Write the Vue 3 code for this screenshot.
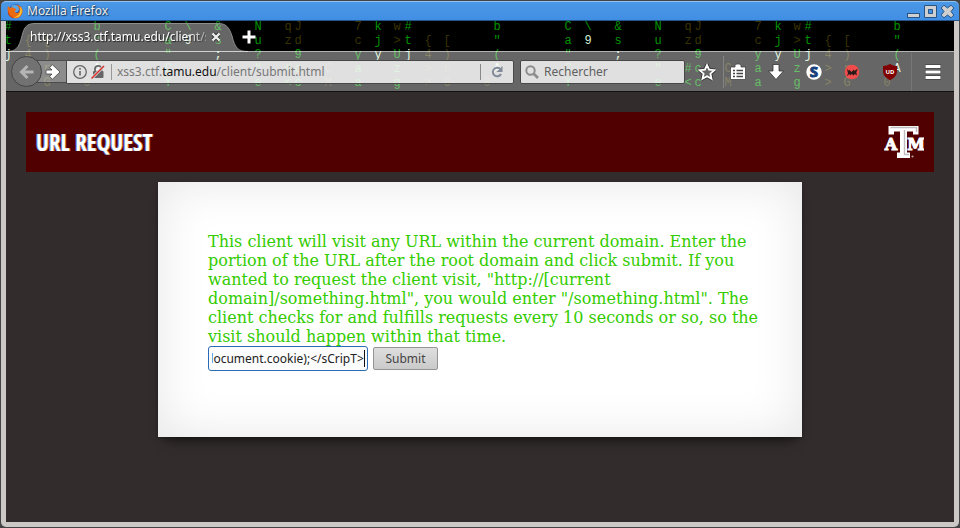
<script setup>
import { ref, onMounted } from 'vue'

// Falling-glyph theme: one 400px tile, repeated across the window.
// Tones: g = green, d = dim, w = bright
const columns = [
  { x: 8, tones: 'ggw', chars: ['#', 't', 'j'] },
  { x: 28, tones: 'ddddd', chars: ['', '{', '4', '>', '>'] },
  { x: 47, tones: 'ddddd', chars: ['', '[', ')', 'r', 'G'] },
  { x: 87, tones: 'ddddd', chars: ['', '', '', '', '0'] },
  { x: 97, tones: 'gggw', chars: ['b', '"', '(', 'A'] },
  { x: 168, tones: 'ggggg', chars: ['C', 'a', '"', 'C', 'Y'] },
  { x: 188, tones: 'gw', chars: ['\\', '9'] },
  { x: 218, tones: 'ggw', chars: ['&', 's', ';'] },
  { x: 258, tones: 'ggggg', chars: ['N', 'u', '?', '"', 'e'] },
  { x: 288, tones: 'ddggg', chars: ['q', 'z', '', '#', '<'] },
  { x: 298, tones: 'ddggg', chars: ['J', 'd', '9', 'c', 'c'] },
  { x: 328, tones: 'ddddd', chars: ['', '', '', 'C', 'M'] },
  { x: 358, tones: 'ddggg', chars: ['7', 'c', 'y', 'a', 'a'] },
  { x: 378, tones: 'ggw', chars: ['k', 'j', 'y'] },
  { x: 397, tones: 'ddggg', chars: ['w', '>', 'U', 'z', 'g'] },
]
const glyphs = [0, 400, 800].flatMap((offset) =>
  columns.flatMap((c) =>
    c.chars.map((ch, row) => ({
      key: `${offset}-${c.x}-${row}`,
      ch,
      tone: c.tones[row],
      x: c.x + offset - 6,
      y: 9 + row * 14,
    })),
  ).filter((g) => g.ch),
)

const path = ref('document.cookie);<\/sCripT>')
const pathInput = ref(null)

onMounted(() => {
  const el = pathInput.value
  el.focus()
  el.setSelectionRange(path.value.length, path.value.length)
  el.scrollLeft = el.scrollWidth
})
</script>

<template>
  <div class="window">
    <header class="titlebar">
      <svg class="fox" viewBox="0 0 16 16" aria-hidden="true">
        <circle cx="8.5" cy="7.5" r="6.5" fill="#2b4f9e" />
        <circle cx="8" cy="5.5" r="4" fill="#5aa6e6" />
        <path d="M1 3 L3 5 Q5 3.6 7 5 L9.5 6.5 L7.5 8.2 Q8.5 10.6 11 9.8 Q13 8.8 12.4 6 Q11.6 3 9 2 Q14.2 2 15.6 7 Q15.8 12 12 14.4 Q7 16.6 3 13.4 Q-.6 9.6 1 3Z" fill="#ec6a12" />
        <path d="M13.5 3.5 Q15.8 7.5 14.2 10.8 Q12 15 7 14.6 Q12 12.6 13 9Z" fill="#ffc933" />
        <path d="M1.2 7 Q1 13 7.5 15.2 Q2.5 14.8 .9 10.6Z" fill="#b92d10" />
      </svg>
      <span class="title">Mozilla Firefox</span>
      <div class="controls">
        <button class="ctl" aria-label="Minimize"><svg viewBox="0 0 15 15"><rect x="1.5" y="9.5" width="12" height="4" fill="#cfcfcf" stroke="#265487" /></svg></button>
        <button class="ctl" aria-label="Maximize"><svg viewBox="0 0 15 15"><path d="M1.5 1.5h12v12h-12z M5.500 5.500v4h4v-4z" fill="#cfcfcf" fill-rule="evenodd" stroke="#265487" /></svg></button>
        <button class="ctl" aria-label="Close"><svg viewBox="0 0 15 15"><path d="M4 1.200 7.500 4 11 1.200 13.800 4 11 7.500 13.800 11 11 13.800 7.500 11 4 13.800 1.200 11 4 7.500 1.200 4Z" fill="#cfcfcf" stroke="#265487" stroke-linejoin="round" /></svg></button>
      </div>
    </header>

    <div class="frame">
      <div class="chrome">
        <svg class="rain" aria-hidden="true">
          <text v-for="g in glyphs" :key="g.key" :x="g.x" :y="g.y" :class="g.tone">{{ g.ch }}</text>
        </svg>

        <div class="tabs">
          <div class="tab">
            <svg class="tab-shape" viewBox="0 0 242 31" aria-hidden="true">
              <path d="M0 31 C10 31 13 27 16 15 C18 6 21 2.500 29 2.500 L212 2.500 C220 2.500 223 6 226 15 C229 27 232 31 242 31Z" fill="#fff" fill-opacity=".4" />
              <path d="M0 30.500 C10 30.500 13 27 16 15 C18 6 21 2.500 29 2.500 L212 2.500 C220 2.500 223 6 226 15 C229 27 232 30.500 242 30.500" fill="none" stroke="#8e8e8e" />
            </svg>
            <span class="tab-title">http://xss3.ctf.tamu.edu/client/s</span>
            <button class="tab-close" aria-label="Close tab"><svg viewBox="0 0 10 10"><path d="M2 2 8 8M8 2 2 8" stroke="#333" stroke-width="4" /><path d="M1.500 1.500 8.500 8.500M8.500 1.500 1.500 8.500" stroke="#eee" stroke-width="2.400" /></svg></button>
          </div>
          <button class="new-tab" aria-label="New tab"><svg viewBox="0 0 14 14"><path d="M7 .5V13.500M.5 7H13.500" stroke="#fff" stroke-width="3" /></svg></button>
        </div>

        <nav class="toolbar">
          <button class="back" aria-label="Back"><svg viewBox="0 0 16 16"><path d="M8.500 2 2.500 8 8.500 14M3 8H14.500" fill="none" stroke="#b4b4b4" stroke-width="3" /></svg></button>
          <button class="forward" aria-label="Forward"><svg viewBox="0 0 16 16"><path d="M1 6H7L4.500 3.500 7.500.800 15 8 7.500 15.200 4.500 12.500 7 10H1Z" fill="#fff" stroke="#444" stroke-width=".8" /></svg></button>
          <div class="urlbar">
            <svg class="info" viewBox="0 0 16 16" aria-hidden="true"><circle cx="8" cy="8" r="6.300" fill="none" stroke="#666" stroke-width="1.300" /><path d="M8 7V11.500M8 4V5.700" stroke="#666" stroke-width="1.600" /></svg>
            <svg class="lock" viewBox="0 0 16 16" aria-hidden="true"><path d="M5 8V5a3.200 3.200 0 0 1 6.400 0V8" fill="none" stroke="#666" stroke-width="1.800" /><rect x="3" y="7" width="10.500" height="7" rx="1" fill="#666" /><path d="M1.500 14.500 14 2" stroke="#ddd" stroke-width="3" /><path d="M1.500 14.500 14 2" stroke="#d92b2b" stroke-width="1.500" /></svg>
            <span class="divider"></span>
            <div class="address">
              <input class="url" type="text" aria-label="Address" value="xss3.ctf.tamu.edu/client/submit.html" />
              <span class="url-styled" aria-hidden="true">xss3.ctf.<b>tamu.edu</b>/client/submit.html</span>
            </div>
            <button class="reload" aria-label="Reload"><svg viewBox="0 0 14 14"><path d="M11 9A4.300 4.300 0 1 1 10 3.800" fill="none" stroke="#808a98" stroke-width="2" /><path d="M12.500 1V7H6.500Z" fill="#808a98" /></svg></button>
          </div>
          <div class="search">
            <svg viewBox="0 0 16 16" aria-hidden="true"><circle cx="6.500" cy="6.500" r="4.200" fill="none" stroke="#8c8c8c" stroke-width="2" /><path d="M9.500 9.500 14 14" stroke="#8c8c8c" stroke-width="2.600" /></svg>
            <input type="text" aria-label="Search" placeholder="Rechercher" />
          </div>
          <button class="tool star" aria-label="Bookmark this page"><svg viewBox="0 0 18 18"><path d="M9 2 11.100 6.700 16.300 7.200 12.400 10.700 13.500 15.800 9 13.200 4.500 15.800 5.600 10.700 1.700 7.200 6.900 6.700Z" fill="none" stroke="#333" stroke-width="3.600" stroke-linejoin="round" /><path d="M9 2 11.100 6.700 16.300 7.200 12.400 10.700 13.500 15.800 9 13.200 4.500 15.800 5.600 10.700 1.700 7.200 6.900 6.700Z" fill="#666" stroke="#fff" stroke-width="1.800" /></svg></button>
          <button class="tool list" aria-label="Bookmarks"><svg viewBox="0 0 18 18"><path d="M1.500 4H6V2.500L7.500 1H10.500L12 2.500V4H16.500V16.500H1.500Z" fill="#fff" stroke="#444" stroke-width=".8" /><path d="M4 7.500H6M7.500 7.500H14M4 10.500H6M7.500 10.500H14M4 13.500H6M7.500 13.500H14" stroke="#444" stroke-width="1.300" /></svg></button>
          <button class="tool" aria-label="Downloads"><svg viewBox="0 0 18 18"><path d="M6 1.500H12V8H16.500L9 16.500 1.500 8H6Z" fill="#fff" stroke="#333" stroke-width=".8" /></svg></button>
          <button class="tool" aria-label="Stylish"><svg viewBox="0 0 18 18"><circle cx="9" cy="9" r="7.700" fill="#fff" /><text class="s" x="9" y="14" text-anchor="middle">S</text></svg></button>
          <button class="tool" aria-label="Script blocker"><svg viewBox="0 0 18 18"><circle cx="9" cy="9" r="7.300" fill="#f04c4c" /><path d="M3.500 5 5 7.500 6.500 7 8.500 9 11 6.500 11.500 8 14.800 5.500 13.300 9.500 14 12.500 11.800 11 10.500 12.500 8.500 11 7 12.500 6.300 11 4 13 5 10Z" fill="#2a1a1a" /></svg></button>
          <button class="tool" aria-label="uBlock Origin"><svg viewBox="0 0 18 18"><path d="M9 1Q12 3 16 3V8Q16 14 9 17.200Q2 14 2 8V3Q6 3 9 1Z" fill="#800000" /><text class="ud" x="9" y="11" text-anchor="middle">UD</text></svg></button>
          <button class="menu" aria-label="Menu"><svg viewBox="0 0 18 18"><path d="M1 3.500H17M1 9H17M1 14.500H17" stroke="#333" stroke-width="4" /><path d="M1.500 3.500H16.500M1.500 9H16.500M1.500 14.500H16.500" stroke="#fff" stroke-width="3" /></svg></button>
        </nav>
      </div>

      <main class="page">
        <div class="banner">
          <h1>URL REQUEST</h1>
          <svg class="logo" viewBox="0 0 40 34" role="img" aria-label="Texas A&amp;M">
            <path d="M4.500 1H34.500V9.500H29V6.500H23V27.500H26V33H13V27.500H16V6.500H10V9.500H4.500Z" fill="#fff" />
            <path d="M6.500 2.500H32.500V7M20.500 5V29.500H25" fill="none" stroke="#bdbdbd" stroke-width="1.400" />
            <text x="7" y="25" text-anchor="middle">A</text>
            <text x="32" y="25" text-anchor="middle">M</text>
            <circle cx="28.500" cy="31.500" r="1.100" fill="#bba0a0" />
          </svg>
        </div>

        <section class="card">
          <p>This client will visit any URL within the current domain. Enter the portion of the URL after the root domain and click submit. If you wanted to request the client visit, "http://[current domain]/something.html", you would enter "/something.html". The client checks for and fulfills requests every 10 seconds or so, so the visit should happen within that time.</p>
          <form class="request" @submit.prevent>
            <input ref="pathInput" v-model="path" type="text" aria-label="URL path" />
            <button type="submit">Submit</button>
          </form>
        </section>
      </main>
    </div>
  </div>
</template>

<style>
body {
  background: #444;
}
</style>

<style scoped>
* {
  box-sizing: border-box;
}
button {
  padding: 0;
  border: 0;
  background: none;
}
svg {
  display: block;
}
.window {
  display: flex;
  flex-direction: column;
  min-height: 100vh;
  padding: 1px;
  font: 12px/18px "Noto Sans", sans-serif;
}
.titlebar {
  display: flex;
  align-items: center;
  gap: 4px;
  height: 20px;
  padding: 0 4px 0 6px;
  border-top: 1px solid #8fc3f4;
  border-bottom: 1px solid #245488;
  border-radius: 5px 5px 0 0;
  background: linear-gradient(#4b98e6, #418fe4);
}
.fox {
  width: 16px;
  height: 16px;
}
.title {
  flex: 1;
  color: #f0f0f0;
  text-shadow: 0 0 2px #17395f, 1px 1px 1px #17395f;
}
.controls {
  display: flex;
  gap: 2px;
}
.ctl {
  width: 15px;
  height: 15px;
}
.frame {
  flex: 1;
  display: flex;
  flex-direction: column;
  padding: 0 5px 5px;
  border-radius: 0 0 5px 5px;
  background: #cbc8c6;
}
.chrome {
  position: relative;
  overflow: hidden;
  background: #000;
}
.rain {
  position: absolute;
  inset: 0;
  width: 100%;
  height: 100%;
  font: 12px "Liberation Mono", monospace;
  text-anchor: middle;
}
.rain .g {
  fill: #009400;
}
.rain .d {
  fill: #3a3300;
}
.rain .w {
  fill: #d0ecd0;
}
.tabs {
  position: relative;
  display: flex;
  height: 30px;
}
.tab {
  position: relative;
  display: flex;
  align-items: center;
  width: 236px;
  padding: 2px 0 0 24px;
}
.tab-shape {
  position: absolute;
  left: 0;
  top: 0;
  width: 242px;
  height: 31px;
}
.tab-title {
  position: relative;
  width: 176px;
  overflow: hidden;
  white-space: nowrap;
  color: #fff;
  text-shadow: 1px 1px 1px #222;
  mask-image: linear-gradient(90deg, #000 156px, transparent 188px);
}
.tab-close {
  position: relative;
  width: 10px;
  height: 10px;
  margin-left: 5px;
}
.new-tab {
  width: 14px;
  height: 14px;
  margin-top: 9px;
}
.toolbar {
  position: relative;
  display: flex;
  align-items: center;
  height: 41px;
  padding: 0 1px 0 5px;
  border-top: 1px solid rgba(255, 255, 255, .5);
  border-bottom: 1px solid #111;
  background: rgba(255, 255, 255, .4);
}
.back {
  z-index: 1;
  display: grid;
  place-items: center;
  width: 31px;
  height: 31px;
  border: 1px solid #444;
  border-radius: 50%;
  background: #727272;
}
.back svg,
.forward svg {
  width: 16px;
  height: 16px;
}
.forward {
  display: grid;
  place-items: center;
  width: 32px;
  height: 23px;
  margin-left: -8px;
  padding-left: 6px;
  border: 1px solid #4c4c4c;
  border-width: 1px 0;
  background: rgba(255, 255, 255, .25);
}
.urlbar,
.search {
  display: flex;
  align-items: center;
  height: 24px;
  border: 1px solid #484848;
  background: rgba(255, 255, 255, .8);
}
.urlbar {
  flex: 1;
  min-width: 0;
  padding-left: 5px;
  border-radius: 0 2px 2px 0;
}
.info,
.lock {
  width: 16px;
  height: 16px;
}
.lock {
  margin-left: 2px;
}
.divider {
  width: 1px;
  height: 16px;
  margin: 0 5px;
  background: #999;
}
.address {
  display: grid;
  flex: 1;
  min-width: 0;
}
.url,
.url-styled {
  grid-area: 1 / 1;
  min-width: 0;
  white-space: nowrap;
}
.url,
.search input {
  padding: 0;
  border: 0;
  outline: 0;
  background: none;
  font: inherit;
}
.url {
  color: transparent;
}
.url-styled {
  color: #777;
  pointer-events: none;
}
.url-styled b {
  color: #111;
  font-weight: 400;
}
.reload {
  display: grid;
  place-items: center;
  width: 33px;
  height: 16px;
  border-left: 1px solid #888;
}
.reload svg {
  width: 14px;
  height: 14px;
}
.search {
  width: 165px;
  margin-left: 6px;
  padding-left: 3px;
  gap: 4px;
  border-radius: 2px;
}
.search svg {
  width: 16px;
  height: 16px;
}
.search input {
  flex: 1;
  min-width: 0;
}
.search input::placeholder {
  color: #606060;
  opacity: 1;
}
.tool,
.menu {
  display: grid;
  place-items: center;
  width: 38px;
  height: 32px;
}
.tool svg,
.menu svg {
  width: 18px;
  height: 18px;
}
.tool.star {
  padding-left: 6px;
}
.tool.list {
  width: 34px;
  padding-right: 6px;
  border-left: 1px solid #858585;
}
.menu {
  width: 42px;
  height: 38px;
  margin-left: 2px;
  border-left: 1px solid #777;
}
.s {
  font: bold 15px "Noto Sans", sans-serif;
  fill: #173f7c;
  stroke: #173f7c;
  stroke-width: 1px;
}
.ud {
  font: bold 6px "Noto Sans", sans-serif;
  fill: #fff;
}
.page {
  flex: 1;
  padding: 20px;
  background: #322c2c;
}
.banner {
  display: flex;
  align-items: center;
  justify-content: space-between;
  height: 60px;
  padding: 0 10px;
  background: #500000;
}
h1 {
  margin: 0;
  color: #fff;
  font: bold 23px/24px "Liberation Sans Narrow", "Open Sans Condensed", "Roboto Condensed", "Liberation Sans", sans-serif;
  text-shadow: -1px 0 #5c7fd0, 1px 0 #c66a30;
}
.logo {
  width: 40px;
  height: 34px;
}
.logo text {
  font: bold 16px "DejaVu Serif", serif;
  fill: #fff;
  stroke: #fff;
  stroke-width: 1px;
}
.card {
  position: relative;
  width: 71%;
  max-width: 644px;
  margin: 10px auto 0;
  padding: 50px 36px 66px 50px;
  background: #fff;
  box-shadow: 0 1px 4px rgba(0, 0, 0, .3), 0 10px 12px -8px rgba(0, 0, 0, .6), inset 0 0 50px rgba(0, 0, 0, .1);
}
.card p {
  margin: 0;
  color: #33cc00;
  font: 16px/19px "DejaVu Serif", serif;
}
.request {
  display: flex;
  align-items: center;
  gap: 5px;
}
.request input {
  width: 160px;
  height: 25px;
  padding: 0 3px;
  border: 1px solid #2a6bb5;
  border-radius: 3px;
  outline: 0;
  background: linear-gradient(#111, #111) right 2px center / 1px 17px no-repeat #fcfcfc;
  caret-color: transparent;
  color: #222;
  font: inherit;
}
.request button {
  width: 65px;
  height: 23px;
  border: 1px solid #949494;
  border-radius: 2px;
  background: linear-gradient(#dedede, #cacaca);
  color: #444;
  font: inherit;
}
</style>
